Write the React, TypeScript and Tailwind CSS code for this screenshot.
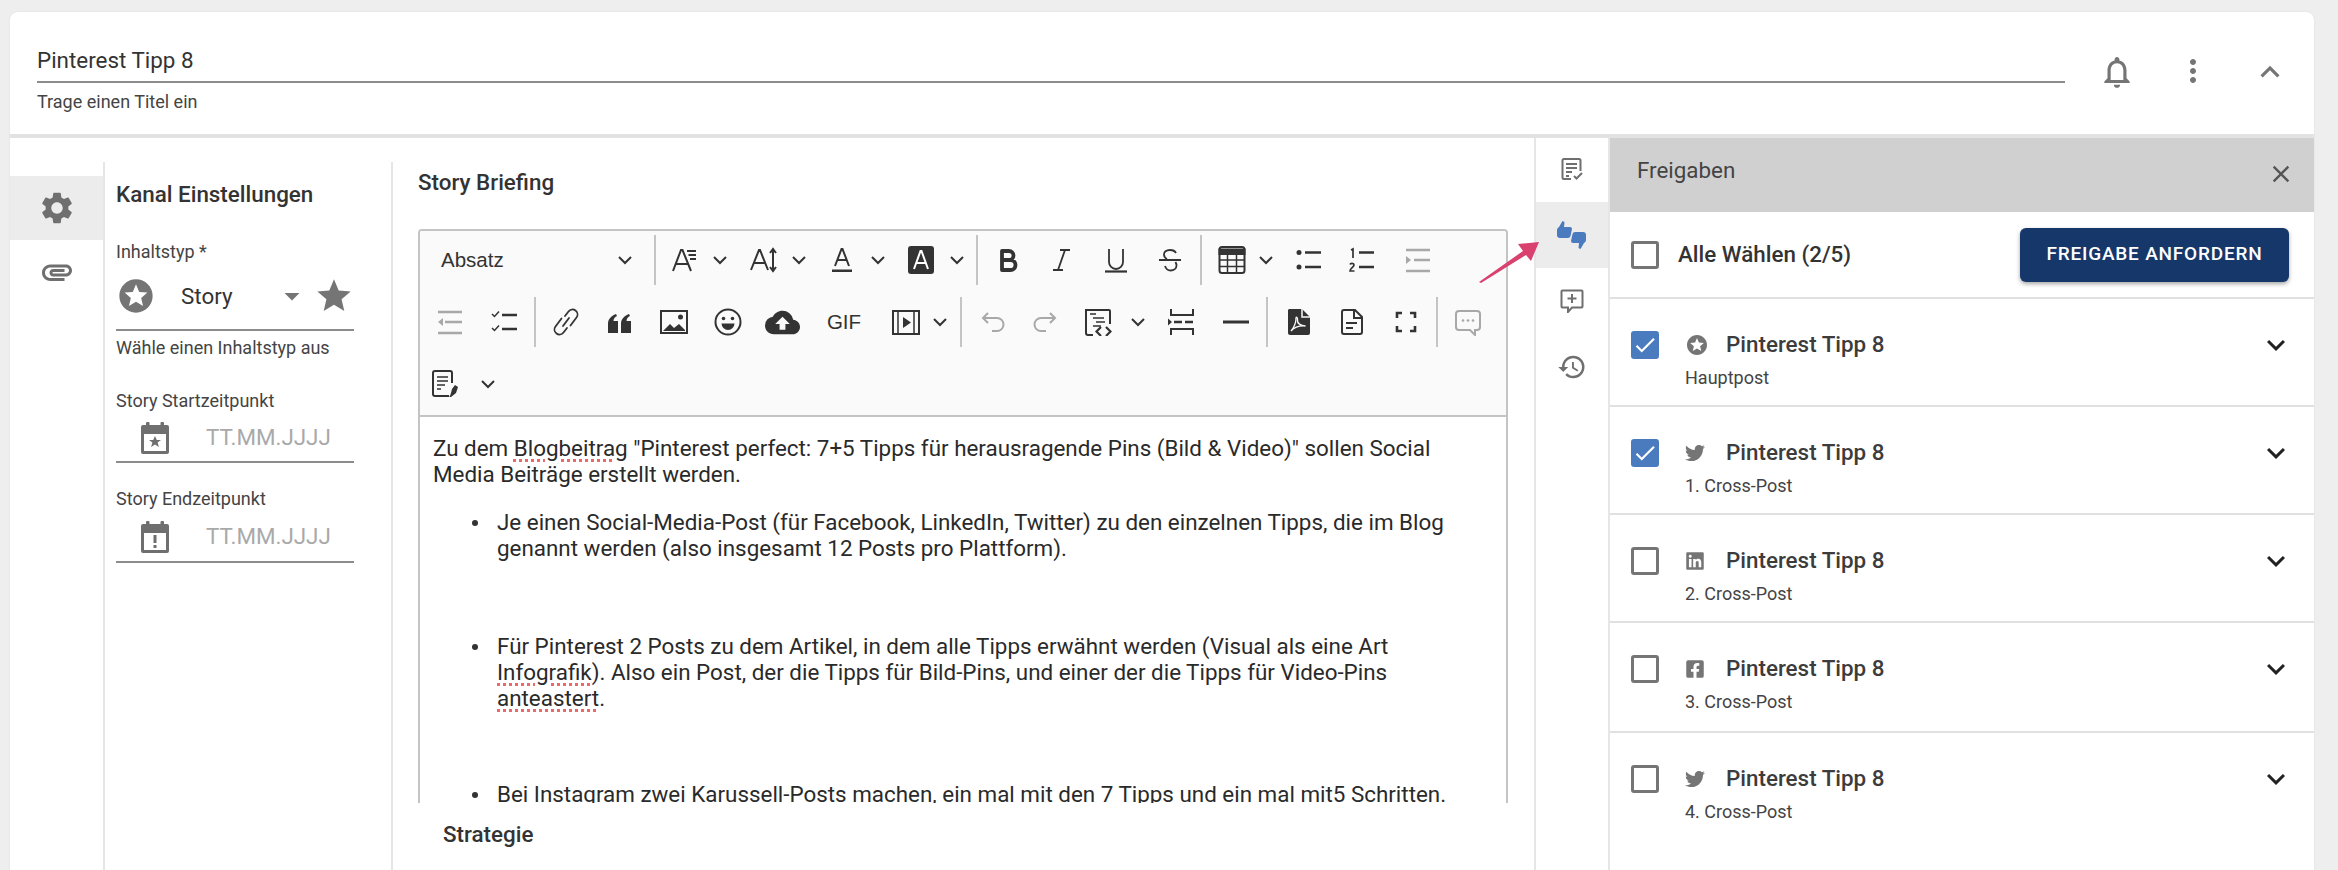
import type { ReactNode } from "react";
import {
  MdSettings, MdStars, MdStar, MdArrowDropDown, MdOutlineNotifications, MdMoreVert,
  MdKeyboardArrowUp, MdKeyboardArrowDown, MdClose, MdHistory, MdCloudUpload, MdCheck,
} from "react-icons/md";
import { FaTwitter, FaLinkedin, FaFacebookSquare } from "react-icons/fa";

function Ico({ children, className = "text-[#333]" }: { children: ReactNode; className?: string }) {
  return (
    <svg viewBox="0 0 28 28" width={28} height={28} fill="none" stroke="currentColor" strokeWidth={2} className={"shrink-0 " + className}>
      {children}
    </svg>
  );
}

function Cell({ ml, children }: { ml: string; children: ReactNode }) {
  return <div className={"flex h-7 w-7 shrink-0 items-center justify-center " + ml}>{children}</div>;
}

function Chev({ ml }: { ml: string }) {
  return (
    <svg viewBox="0 0 16 10" width={16} height={10} fill="none" stroke="#333" strokeWidth={2} className={"shrink-0 " + ml}>
      <path d="M2 2l6 6 6-6" />
    </svg>
  );
}

function Sep({ ml }: { ml: string }) {
  return <div className={"h-[50px] w-[2px] shrink-0 bg-[#c4c4c4] " + ml} />;
}

const gray = "text-[#a8a8a8]";

function ToolbarRows() {
  return (
    <div className="border-b-2 border-[#c4c4c4] bg-[#fafafa]">
      <div className="mb-[2px] flex h-[58px] items-center">
        <div className="flex w-[234px] shrink-0 items-center justify-between pl-[21px] pr-[21px] font-['Liberation_Sans',sans-serif] text-[20.5px] text-[#333]">
          <span>Absatz</span>
          <Chev ml="" />
        </div>
        <Sep ml="" />
        <Cell ml="ml-[14px]"><Ico><path d="M3 25L11 4h1.5L21 25M6 18h12" /><path d="M17 5h9M18.5 9h7.5M20 13h6" /></Ico></Cell>
        <Chev ml="ml-[14px]" />
        <Cell ml="ml-[22px]"><Ico><path d="M1 24L9 4h1l8 20M4 17h12M23 3v22M20 7l3-4 3 4M20 21l3 4 3-4" /></Ico></Cell>
        <Chev ml="ml-[13px]" />
        <Cell ml="ml-[21px]"><Ico><path d="M7 20L13.5 3h1L21 20M9.5 14h9" /><rect x="4" y="23.5" width="20" height="2.5" fill="currentColor" stroke="none" /></Ico></Cell>
        <Chev ml="ml-[14px]" />
        <Cell ml="ml-[21px]"><Ico><rect x="1" y="0" width="26" height="28" rx="3" fill="currentColor" stroke="none" /><path d="M7 23L13.5 5h1L21 23M9.5 17h9" stroke="#fff" /></Ico></Cell>
        <Chev ml="ml-[14px]" />
        <Sep ml="ml-[11px]" />
        <Cell ml="ml-[16px]"><Ico><path d="M8 5h7a4.5 4.5 0 0 1 0 9H8zM8 14h8.5a5 5 0 0 1 0 10H8z" strokeWidth={3.8} strokeLinejoin="round" /></Ico></Cell>
        <Cell ml="ml-[25px]"><Ico><path d="M13 4h10M6 24h10M18 4L11 24" strokeWidth={1.8} /></Ico></Cell>
        <Cell ml="ml-[27px]"><Ico><path d="M7 3v13a7 7 0 0 0 14 0V3" strokeWidth={1.8} /><path d="M3 25.5h22" strokeWidth={2.2} /></Ico></Cell>
        <Cell ml="ml-[26px]"><Ico><path d="M20 7c-1-2-3-3-6-3-4 0-6 2-6 4.5 0 2 1 3.5 3 4.5M9 20c1 3 3 4.5 5.5 4.5 3.5 0 6-2 6-5 0-1.5-.5-2.5-1-3.5M3 14h22" strokeWidth={1.8} /></Ico></Cell>
        <Sep ml="ml-[16px]" />
        <Cell ml="ml-[16px]"><Ico><rect x="1.5" y="1" width="25" height="26" rx="2.5" /><path d="M1.5 3.5h25V8h-25z" fill="currentColor" /><path d="M1.5 14h25M1.5 20.5h25M9.5 7v20M18.5 7v20" strokeWidth={1.5} /></Ico></Cell>
        <Chev ml="ml-[12px]" />
        <Cell ml="ml-[21px]"><Ico><circle cx="4" cy="6.5" r="2.5" fill="currentColor" stroke="none" /><circle cx="4" cy="21" r="2.5" fill="currentColor" stroke="none" /><path d="M10 6.5h16M10 21h16" strokeWidth={2.4} /></Ico></Cell>
        <Cell ml="ml-[25px]"><Ico><path d="M3 4l2-1v9M2 18.5c.5-1.5 4-1.5 4 .5s-4 3.5-4 6h4.5" strokeWidth={1.7} /><path d="M11 6.5h15M11 21h15" strokeWidth={2.4} /></Ico></Cell>
        <Cell ml="ml-[28px]"><Ico className={gray}><path d="M2 10l5 4-5 4z" fill="currentColor" stroke="none" /><path d="M2 4h24M10 14h16M2 25h24" strokeWidth={2.4} /></Ico></Cell>
      </div>
      <div className="flex h-[62px] items-center">
        <Cell ml="ml-[16px]"><Ico className={gray}><path d="M7 10l-5 4 5 4z" fill="currentColor" stroke="none" /><path d="M2 4h24M9 14h17M2 25h24" strokeWidth={2.4} /></Ico></Cell>
        <Cell ml="ml-[26px]"><Ico><path d="M2 6l2.5 2.5L9 3.5M2 20l2.5 2.5 4.5-5" strokeWidth={1.5} /><path d="M12 7h15M12 21h15" strokeWidth={2.4} /></Ico></Cell>
        <Sep ml="ml-[16px]" />
        <Cell ml="ml-[16px]"><Ico><path d="M13 8l3.5-4.5a5 5 0 0 1 8 6l-6 8M15 20l-3.500 4.500a5 5 0 0 1-8-6l6-8M11 18l6-8" strokeWidth={1.8} strokeLinecap="round" /></Ico></Cell>
        <Cell ml="ml-[26px]"><Ico><path d="M2 25v-9c0-5 3-8 8-10l1 2c-2 1-3.5 2.5-3.5 5H12v12zM15 25v-9c0-5 3-8 8-10l1 2c-2 1-3.5 2.5-3.5 5H25v12z" fill="currentColor" stroke="none" /></Ico></Cell>
        <Cell ml="ml-[26px]"><Ico><rect x="1" y="3" width="26" height="22" /><path d="M3 23l7-7 4 4 5-4 6 6v1z" fill="currentColor" stroke="none" /><circle cx="20.5" cy="9" r="2.5" fill="currentColor" stroke="none" /></Ico></Cell>
        <Cell ml="ml-[26px]"><Ico><circle cx="14" cy="14" r="12.5" /><circle cx="9.5" cy="10.5" r="1.8" fill="currentColor" stroke="none" /><circle cx="18.5" cy="10.5" r="1.8" fill="currentColor" stroke="none" /><path d="M7.5 15.5h13a6.5 6.5 0 0 1-13 0z" fill="currentColor" stroke="none" /></Ico></Cell>
        <Cell ml="ml-[26px]"><MdCloudUpload size={35} className="shrink-0 text-[#333]" /></Cell>
        <div className="ml-[28px] w-10 shrink-0 text-center font-['Liberation_Sans',sans-serif] text-[20.5px] text-[#333]">GIF</div>
        <Cell ml="ml-[28px]"><Ico><rect x="1" y="3" width="26" height="23" /><path d="M6 3v23M22 3v23" strokeWidth={1.5} /><path d="M11 9l8 5.5-8 5.5z" fill="currentColor" stroke="none" /></Ico></Cell>
        <Chev ml="ml-[12px]" />
        <Sep ml="ml-[12px]" />
        <Cell ml="ml-[16px]"><Ico className={gray}><path d="M5 10h14a6 6 0 0 1 0 13h-5M10 5l-5 5 5 5" /></Ico></Cell>
        <Cell ml="ml-[26px]"><Ico className={gray}><path d="M23 10H9a6 6 0 0 0 0 13h5M18 5l5 5-5 5" /></Ico></Cell>
        <Cell ml="ml-[24px]"><Ico><path d="M9 27H4a2 2 0 0 1-2-2V2h23a1 1 0 0 1 1 1v13" /><path d="M6 6h6M9 10h11M12 14h9M9 18h8" strokeWidth={1.5} /><path d="M17 19l-4.5 4.5 4.5 4.5M22 19l4.5 4.5L22 28" strokeWidth={2.2} /></Ico></Cell>
        <Chev ml="ml-[18px]" />
        <Cell ml="ml-[21px]"><Ico><path d="M4 1v6h22V1M4 27v-6h22v6" /><path d="M1 10.5l4 3.5-4 3.5z" fill="currentColor" stroke="none" /><path d="M7 14h8M18 14h8" strokeWidth={2.4} /></Ico></Cell>
        <Cell ml="ml-[27px]"><Ico><path d="M1 14h26" strokeWidth={3} /></Ico></Cell>
        <Sep ml="ml-[16px]" />
        <Cell ml="ml-[17px]"><Ico><path d="M4 1h13l8 8v16a2 2 0 0 1-2 2H5a2 2 0 0 1-2-2V2z" fill="currentColor" stroke="none" /><path d="M17 1v8h8" stroke="#fafafa" strokeWidth={1.5} /><path d="M6 23c3-3 5-9 5-12-.5-3 2-2 1.5 1-.5 3 3 6 8 6-6-.5-11 1-14.5 5z" stroke="#fafafa" strokeWidth={1.3} /></Ico></Cell>
        <Cell ml="ml-[25px]"><Ico><path d="M6 2h11l7 7v15a2 2 0 0 1-2 2H6a2 2 0 0 1-2-2V4a2 2 0 0 1 2-2z" /><path d="M16 2v8h8" /><path d="M8 15h11M8 20h7" /></Ico></Cell>
        <Cell ml="ml-[26px]"><Ico><path d="M5 10V5h5M18 5h5v5M23 18v5h-5M10 23H5v-5" strokeWidth={2.6} /></Ico></Cell>
        <Sep ml="ml-[16px]" />
        <Cell ml="ml-[16px]"><Ico className={gray}><path d="M5 3h18a3 3 0 0 1 3 3v13a3 3 0 0 1-3 3h-2v5l-5-5H5a3 3 0 0 1-3-3V6a3 3 0 0 1 3-3z" /><circle cx="9" cy="12.5" r="1.3" fill="currentColor" stroke="none" /><circle cx="14" cy="12.5" r="1.3" fill="currentColor" stroke="none" /><circle cx="19" cy="12.5" r="1.3" fill="currentColor" stroke="none" /></Ico></Cell>
      </div>
      <div className="flex h-[62px] items-center">
        <Cell ml="ml-[12px]"><Ico><path d="M17 26H3a2 2 0 0 1-2-2V3a2 2 0 0 1 2-2h15a2 2 0 0 1 2 2v10" /><path d="M5 7h11M5 11h11M5 15h8M5 19h4" strokeWidth={1.7} /><path d="M17 27c1 0 2-4 3-8l3-4 3 2-2 6-5 4z" fill="currentColor" stroke="none" /></Ico></Cell>
        <Chev ml="ml-[20px]" />
      </div>
    </div>
  );
}

function Misspelled({ children }: { children: ReactNode }) {
  return <span className="underline decoration-[#ea6a6a] decoration-dotted decoration-[3px] underline-offset-[3px]">{children}</span>;
}

const bullet = "relative before:absolute before:-left-[25px] before:top-[11px] before:size-[6px] before:rounded-full before:bg-[#333] before:content-['']";

function EditorBody() {
  return (
    <div className="pl-[13px] pr-7 pt-[18px] text-[22.4px] leading-[26px] text-[#2a2a2a]">
      <p>
        Zu dem <Misspelled>Blogbeitrag</Misspelled> "Pinterest perfect: 7+5 Tipps für herausragende Pins (Bild & Video)" sollen Social Media Beiträge erstellt werden.
      </p>
      <ul className="mt-[22px] pl-[64px]">
        <li className={bullet}>Je einen Social-Media-Post (für Facebook, LinkedIn, Twitter) zu den einzelnen Tipps, die im Blog genannt werden (also insgesamt 12 Posts pro Plattform).</li>
        <li className={"mt-[72px] " + bullet}>
          Für Pinterest 2 Posts zu dem Artikel, in dem alle Tipps erwähnt werden (Visual als eine Art <Misspelled>Infografik</Misspelled>). Also ein Post, der die Tipps für Bild-Pins, und einer der die Tipps für Video-Pins <Misspelled>anteastert</Misspelled>.
        </li>
        <li className={"mt-[70px] " + bullet}>Bei Instagram zwei Karussell-Posts machen, ein mal mit den 7 Tipps und ein mal mit5 Schritten.</li>
      </ul>
    </div>
  );
}

function CalendarIcon({ alert }: { alert?: boolean }) {
  return (
    <svg viewBox="0 0 28 32" width={28} height={32} className="shrink-0 text-[#6f6f6f]" fill="currentColor">
      <rect x="5" y="0" width="3.5" height="6" rx="1" />
      <rect x="19.5" y="0" width="3.5" height="6" rx="1" />
      <path d="M2 3h24a2 2 0 0 1 2 2v25a2 2 0 0 1-2 2H2a2 2 0 0 1-2-2V5a2 2 0 0 1 2-2zm1 9v17h22V12z" fillRule="evenodd" />
      {alert ? (
        <>
          <rect x="12.5" y="14" width="3" height="8" />
          <rect x="12.5" y="24" width="3" height="3" />
        </>
      ) : (
        <path d="M14 14l1.8 4h4.2l-3.4 2.6 1.3 4.4-3.9-2.6-3.9 2.6 1.3-4.4-3.4-2.6h4.2z" />
      )}
    </svg>
  );
}

function DateField({ alert, className }: { alert?: boolean; className: string }) {
  return (
    <div className={"flex items-center border-b-2 border-[#8c8c8c] pl-[25px] " + className}>
      <CalendarIcon alert={alert} />
      <span className="ml-[37px] text-[22.4px] text-[#a9a9a9]">TT.MM.JJJJ</span>
    </div>
  );
}

function SettingsColumn() {
  return (
    <div className="mt-6 w-[290px] shrink-0 border-x-2 border-[#e6e6e6] pl-[11px] pr-[37px] pt-5">
      <h2 className="text-[22.4px] font-medium leading-6 text-[#333]">Kanal Einstellungen</h2>
      <div className="mt-9 text-[18px] leading-5 text-[#444]">Inhaltstyp *</div>
      <div className="mt-2 flex h-[61px] items-start border-b-2 border-[#8c8c8c] pt-[6px]">
        <MdStars size={40} className="shrink-0 text-[#757575]" />
        <span className="ml-[25px] text-[22.4px] leading-10 text-[#333]">Story</span>
        <MdArrowDropDown size={36} className="ml-auto mt-[2px] shrink-0 text-[#757575]" />
        <MdStar size={40} className="ml-1 shrink-0 text-[#757575]" />
      </div>
      <div className="mt-[7px] text-[18px] leading-5 text-[#444]">Wähle einen Inhaltstyp aus</div>
      <div className="mt-[33px] text-[18px] leading-5 text-[#444]">Story Startzeitpunkt</div>
      <DateField className="mt-1 h-12" />
      <div className="mt-[26px] text-[18px] leading-5 text-[#444]">Story Endzeitpunkt</div>
      <DateField alert className="mt-1 h-[50px]" />
    </div>
  );
}

function ReleaseRow({ checked, icon, sub, className }: { checked?: boolean; icon: ReactNode; sub: string; className: string }) {
  return (
    <div className={"relative flex pl-[21px] pr-[20px] " + className}>
      <Checkbox checked={checked} className="mt-[32px]" />
      <div className="ml-[26px] mt-8 min-w-0 flex-1">
        <div className="flex h-7 items-center">
          <div className="flex w-[41px] shrink-0 items-center text-[#757575]">{icon}</div>
          <span className="text-[22.4px] font-medium text-[#3c3c3c]">Pinterest Tipp 8</span>
          <MdKeyboardArrowDown size={36} className="ml-auto shrink-0 text-[#222]" />
        </div>
        <div className="mt-[9px] text-[18px] leading-5 text-[#444]">{sub}</div>
      </div>
    </div>
  );
}

function Checkbox({ checked, className = "" }: { checked?: boolean; className?: string }) {
  return checked ? (
    <div className={"flex h-7 w-7 shrink-0 items-center justify-center rounded-[3px] bg-[#4a7bbf] " + className}>
      <MdCheck size={26} className="text-white" />
    </div>
  ) : (
    <div className={"h-7 w-7 shrink-0 rounded-[3px] border-[3px] border-[#757575] " + className} />
  );
}

function ReleasePanel() {
  const divided = "border-b-2 border-[#e0e0e0]";
  return (
    <div className="-mt-[2px] flex min-w-0 flex-1 flex-col">
      <div className="flex h-[76px] shrink-0 items-start justify-between bg-[#d0d0d0] pl-[27px] pr-[19px] pt-[20px]">
        <span className="text-[22.4px] leading-7 text-[#444]">Freigaben</span>
        <MdClose size={28} className="mt-[4px] text-[#555]" />
      </div>
      <div className={"flex h-[87px] shrink-0 items-center pl-[21px] pr-[25px] " + divided}>
        <Checkbox />
        <span className="ml-[19px] text-[22.4px] font-medium text-[#333]">Alle Wählen (2/5)</span>
        <button className="ml-auto h-[54px] w-[269px] rounded-md bg-[#16376a] text-[19px] font-medium tracking-[0.8px] text-white shadow-[0_2px_4px_rgba(0,0,0,0.35)]">
          FREIGABE ANFORDERN
        </button>
      </div>
      <ReleaseRow checked className={"h-[108px] " + divided} sub="Hauptpost" icon={<MdStars size={24} />} />
      <ReleaseRow checked className={"h-[108px] " + divided} sub="1. Cross-Post" icon={<FaTwitter size={20} />} />
      <ReleaseRow className={"h-[108px] " + divided} sub="2. Cross-Post" icon={<FaLinkedin size={20} />} />
      <ReleaseRow className={"h-[110px] " + divided} sub="3. Cross-Post" icon={<FaFacebookSquare size={20} />} />
      <ReleaseRow className="flex-1" sub="4. Cross-Post" icon={<FaTwitter size={20} />} />
    </div>
  );
}

function Rail() {
  const base = "flex h-[66px] items-center justify-center text-[#6f6f6f]";
  return (
    <div className="-mt-[2px] w-[76px] shrink-0 border-x-2 border-[#e6e6e6]">
      <div className={base}>
        <svg viewBox="0 0 24 24" width={24} height={24} fill="none" stroke="currentColor" strokeWidth={2}>
          <path d="M11 22H4a1.5 1.5 0 0 1-1.5-1.5v-17A1.5 1.5 0 0 1 4 2h15a1.5 1.5 0 0 1 1.5 1.5V14" />
          <path d="M6 7h11M6 11h11M6 15h6M6 19h3" />
          <path d="M14 19l2.5 2.5L22 16" />
        </svg>
      </div>
      <div className={base + " bg-[#ececec]"}>
        <svg viewBox="0 0 30 28" width={30} height={28} fill="#4a7bbf">
          <path d="M5.5 0L7.5 1L7 6H13Q15 6 15 8L13.5 15Q13 17 11 17H3Q0 17 0 14V9Q0 7 2 6Z" />
          <path transform="translate(29 28) rotate(180)" d="M5.5 0L7.5 1L7 6H13Q15 6 15 8L13.5 15Q13 17 11 17H3Q0 17 0 14V9Q0 7 2 6Z" />
        </svg>
      </div>
      <div className={base}>
        <svg viewBox="0 0 24 24" width={24} height={24} fill="none" stroke="currentColor" strokeWidth={2}>
          <path d="M2.5 1.5h19a1 1 0 0 1 1 1v15a1 1 0 0 1-1 1H12L8 23v-4.5H2.5a1 1 0 0 1-1-1V2.500a1 1 0 0 1 1-1z" />
          <path d="M12 5v9M7.5 9.5h9" />
        </svg>
      </div>
      <div className={base}><MdHistory size={30} /></div>
    </div>
  );
}

export default function App() {
  return (
    <div className="h-[870px] overflow-hidden bg-[#eeeeee] pl-[10px] pr-[24px] pt-3 font-['Roboto',sans-serif]">
      <div className="relative flex h-[858px] flex-col rounded-t-lg bg-white shadow-[0_0_2px_rgba(0,0,0,0.08)]">
        <header className="relative flex h-[126px] shrink-0 border-b-4 border-[#e2e2e2]">
          <div className="ml-[27px] w-[2028px] pt-[33px]">
            <div className="h-[38px] border-b-2 border-[#8c8c8c] text-[22.4px] leading-[30px] text-[#333]">Pinterest Tipp 8</div>
            <div className="mt-[9px] text-[18px] leading-5 text-[#444]">Trage einen Titel ein</div>
          </div>
          <div className="ml-[33px] flex h-[122px] items-start pt-[41px] text-[#757575]">
            <MdOutlineNotifications size={38} />
            <MdMoreVert size={36} className="ml-[39px]" />
            <MdKeyboardArrowUp size={38} className="ml-[40px]" />
          </div>
        </header>
        <main className="flex min-h-0 flex-1">
          <div className="w-[93px] shrink-0 pt-[38px]">
            <div className="flex h-16 items-center justify-center bg-[#ececec]">
              <MdSettings size={38} className="text-[#6f6f6f]" />
            </div>
            <div className="flex h-16 items-center justify-center">
              <svg viewBox="0 0 24 24" width={36} height={36} fill="#6f6f6f">
                <path d="M2 12.5C2 9.46 4.46 7 7.5 7H18c2.21 0 4 1.79 4 4s-1.79 4-4 4H9.5C8.12 15 7 13.88 7 12.5S8.12 10 9.5 10H17v2H9.41c-.55 0-.55 1 0 1H18c1.1 0 2-.9 2-2s-.9-2-2-2H7.5C5.57 9 4 10.57 4 12.5S5.57 16 7.5 16H17v2H7.5C4.46 18 2 15.54 2 12.5z" />
              </svg>
            </div>
          </div>
          <SettingsColumn />
          <div className="w-[1141px] shrink-0 pl-[25px] pt-[30px]">
            <h2 className="text-[22.4px] font-medium leading-7 text-[#333]">Story Briefing</h2>
            <div className="mt-[33px] h-[574px] w-[1090px] overflow-hidden rounded-t-sm border-x-2 border-t-2 border-[#c4c4c4]">
              <ToolbarRows />
              <EditorBody />
            </div>
            <h2 className="ml-[25px] mt-[17px] text-[22.4px] font-medium leading-7 text-[#333]">Strategie</h2>
          </div>
          <Rail />
          <ReleasePanel />
        </main>
        {/* Hinweispfeil auf den Freigaben-Tab */}
        <svg viewBox="0 0 70 50" width={70} height={50} className="absolute left-[1467px] top-[222px]">
          <path d="M2 48L46 17l-5-7 21-2-8 19-5-6L4 49z" fill="#d9416f" />
        </svg>
      </div>
    </div>
  );
}
